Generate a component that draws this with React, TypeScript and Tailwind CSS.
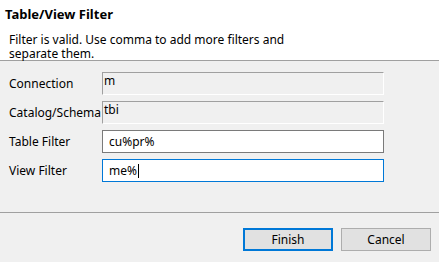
export default function App() {
  const font = { fontFamily: '"Segoe UI", "Noto Sans", sans-serif' };
  return (
    <div className="flex h-[262px] w-[439px] flex-col bg-[#f0f0f0] text-[12px] text-black" style={font}>
      {/* Title area */}
      <div className="h-[61px] border-b border-[#a0a0a0] bg-white px-[9px] pt-[5px]">
        <div className="-ml-[4px] text-[13px] font-bold leading-[18px]">Table/View Filter</div>
        <div className="mt-[10px] w-[280px] leading-[14px]">
          Filter is valid. Use comma to add more filters and separate them.
        </div>
      </div>

      {/* Fields */}
      <div className="flex-1 pl-[9px] pt-[11px]">
        <div className="grid grid-cols-[93px_282px] gap-y-[6px]">
          <label className="flex h-[23px] items-center">Connection</label>
          <div className="h-[23px] border border-b-white border-l-[#a0a0a0] border-r-white border-t-[#a0a0a0] pl-[1px] leading-4">
            m
          </div>
          <label className="flex h-[23px] items-center">Catalog/Schema</label>
          <div className="h-[23px] border border-b-white border-l-[#a0a0a0] border-r-white border-t-[#a0a0a0] pl-[1px] leading-4">
            tbi
          </div>
          <label className="flex h-[23px] items-center">Table Filter</label>
          <div className="flex h-[23px] items-center border border-[#7a7a7a] bg-white px-[6px]">cu%pr%</div>
          <label className="flex h-[23px] items-center">View Filter</label>
          <div className="flex h-[23px] items-center border border-[#0078d7] bg-white px-[6px]">
            me%
            <span className="ml-[1px] h-[14px] w-px bg-black" />
          </div>
        </div>
      </div>

      {/* Buttons */}
      <div className="flex h-[50px] justify-end gap-[8px] border-t border-[#a0a0a0] pr-[8px] pt-[15px]">
        <button className="h-[23px] w-[90px] border-2 border-[#0078d7] bg-[#e1e1e1]">Finish</button>
        <button className="h-[23px] w-[90px] border border-[#adadad] bg-[#e1e1e1]">Cancel</button>
      </div>
    </div>
  );
}
